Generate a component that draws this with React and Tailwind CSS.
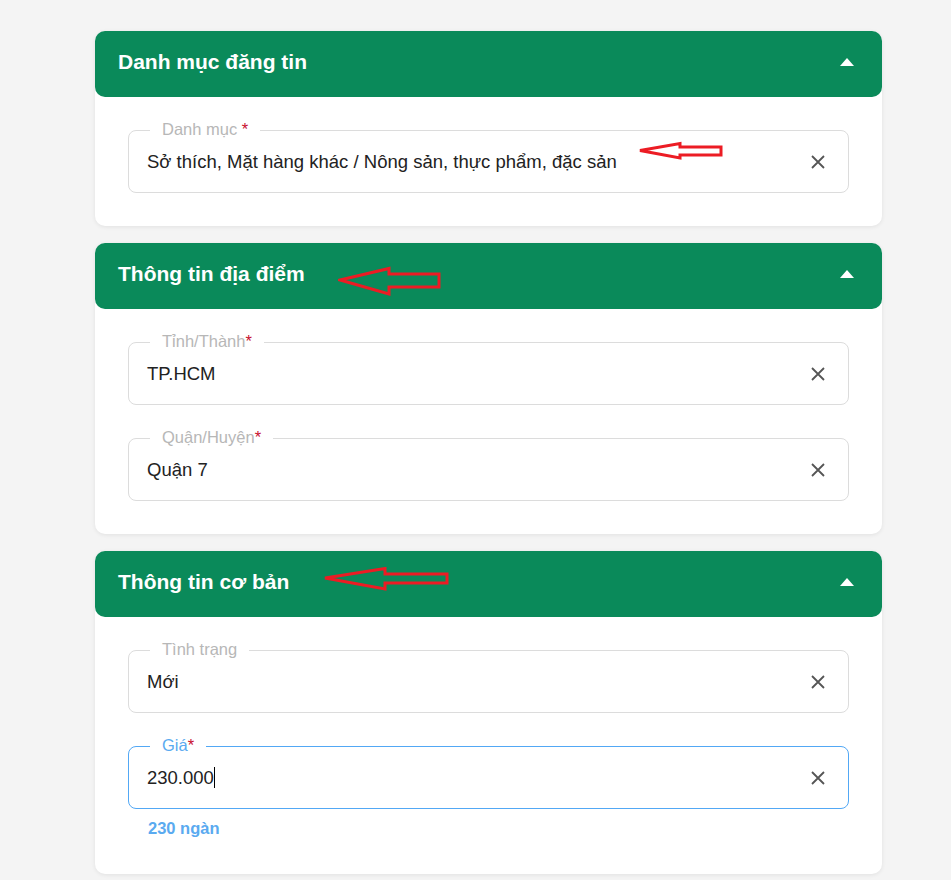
import React from 'react';

const RedArrow = ({ className, w, h, d }) => (
  <svg className={className} width={w} height={h} viewBox={`0 0 ${w} ${h}`} fill="none">
    <path d={d} stroke="#ec1c24" strokeWidth="3" strokeLinejoin="miter" />
  </svg>
);

function Field({ label, star = true, gap = false, value, focused = false, caret = false }) {
  return (
    <div
      className={`relative rounded-lg border h-[63px] pl-[18px] pr-[22px] flex items-center ${
        focused ? 'border-[#52a8f5]' : 'border-[#dcdcdc]'
      }`}
    >
      <span
        className={`absolute -top-[11px] left-[21px] px-3 bg-white text-[16.5px] leading-[18px] ${
          focused ? 'text-[#5aaaf0]' : 'text-[#b7b7b7]'
        }`}
      >
        {label}
        {star && <span className="text-[#c8102e]">{gap ? ' *' : '*'}</span>}
      </span>
      <span className="flex-1 text-[18.5px] text-[#222]">
        {value}
        {caret && <span className="inline-block w-px h-[21px] bg-black align-[-4px]" />}
      </span>
      <svg width="16" height="16" viewBox="0 0 16 16" fill="none">
        <path d="M2 2L14 14M14 2L2 14" stroke="#555" strokeWidth="1.8" />
      </svg>
    </div>
  );
}

function Section({ title, children, arrow }) {
  return (
    <div className="rounded-[10px] bg-white shadow-[0_1px_4px_rgba(0,0,0,0.08)]">
      <div className="relative h-[66px] rounded-[10px] bg-[#0a8a5a] flex items-center justify-between pl-[23px] pr-[28px] pb-[4px]">
        <h2 className="text-white font-bold text-[21px]">{title}</h2>
        <svg width="14" height="8" viewBox="0 0 14 8">
          <path d="M7 0L14 8H0Z" fill="#fff" />
        </svg>
        {arrow}
      </div>
      <div className="px-[33px] py-[33px] flex flex-col gap-[33px]">{children}</div>
    </div>
  );
}

export default function App() {
  return (
    <div className="min-h-[880px] bg-[#f4f4f4] pt-[31px] pl-[95px] pr-[69px] font-['Liberation_Sans',Arial,sans-serif]">
      <div className="flex flex-col gap-[17px]">
        <Section title="Danh mục đăng tin">
          <div className="relative">
            <Field label="Danh mục" gap value="Sở thích, Mặt hàng khác / Nông sản, thực phẩm, đặc sản" />
            <RedArrow
              className="absolute left-[510px] top-[10px]"
              w={86}
              h={20}
              d="M2 10.5 L42 3.5 L42 7 L83 7 L83 15 L42 15 L42 18 Z"
            />
          </div>
        </Section>

        <Section
          title="Thông tin địa điểm"
          arrow={
            <RedArrow
              className="absolute left-[243px] top-[23px]"
              w={104}
              h={30}
              d="M2 14 L51 2.5 L51 8 L101 8 L101 21 L51 21 L51 28 Z"
            />
          }
        >
          <Field label="Tỉnh/Thành" value="TP.HCM" />
          <Field label="Quận/Huyện" value="Quận 7" />
        </Section>

        <Section
          title="Thông tin cơ bản"
          arrow={
            <RedArrow
              className="absolute left-[228px] top-[16px]"
              w={126}
              h={24}
              d="M2 11 L62 1.5 L62 7 L124 7 L124 16 L62 16 L62 22 Z"
            />
          }
        >
          <Field label="Tình trạng" star={false} value="Mới" />
          <div className="flex flex-col">
            <Field label="Giá" focused caret value="230.000" />
            <span className="mt-[7px] ml-[20px] text-[16.5px] font-bold text-[#5aaaf0]">230 ngàn</span>
          </div>
        </Section>
      </div>
    </div>
  );
}
